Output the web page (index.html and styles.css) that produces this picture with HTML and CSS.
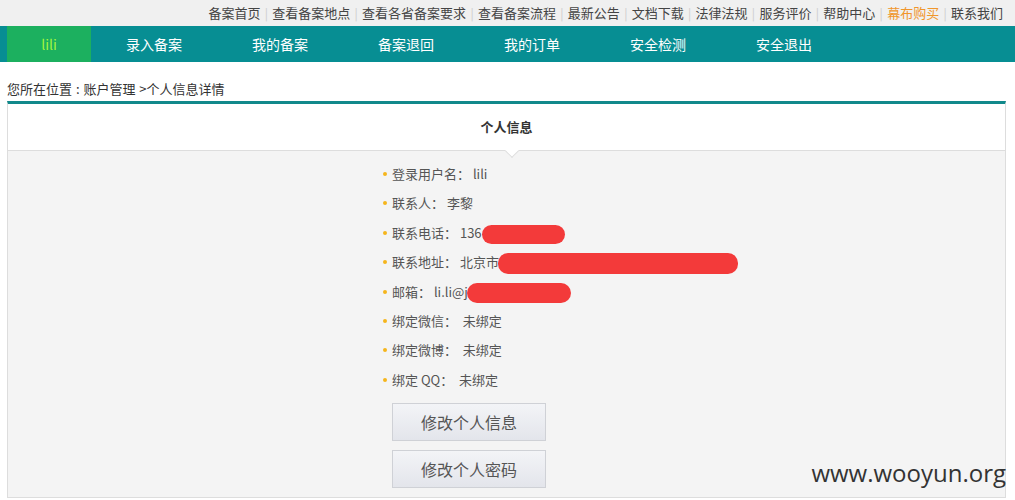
FILE: index.html
```html
<!DOCTYPE html>
<html lang="zh-CN">
<head>
<meta charset="utf-8">
<title>个人信息详情</title>
<link rel="stylesheet" href="styles.css">
</head>
<body>
<div class="topbar">
  <a>备案首页</a><i>|</i><a>查看备案地点</a><i>|</i><a>查看各省备案要求</a><i>|</i><a>查看备案流程</a><i>|</i><a>最新公告</a><i>|</i><a>文档下载</a><i>|</i><a>法律法规</a><i>|</i><a>服务评价</a><i>|</i><a>帮助中心</a><i>|</i><a class="hot">幕布购买</a><i>|</i><a>联系我们</a>
</div>
<div class="nav">
  <div class="nav-inner">
    <a class="user">lili</a>
    <a>录入备案</a>
    <a>我的备案</a>
    <a>备案退回</a>
    <a>我的订单</a>
    <a>安全检测</a>
    <a>安全退出</a>
  </div>
</div>
<div class="page">
  <div class="crumb">您所在位置 : 账户管理 &gt;个人信息详情</div>
  <div class="box">
    <div class="box-head">个人信息<span class="notch"></span></div>
    <div class="box-body">
      <ul class="info">
        <li>登录用户名： lili</li>
        <li>联系人： 李黎</li>
        <li>联系电话： 136<span class="mask m1"></span></li>
        <li>联系地址： 北京市<span class="mask m2"></span></li>
        <li>邮箱： li.li@j<span class="mask m3"></span></li>
        <li>绑定微信：&nbsp; 未绑定</li>
        <li>绑定微博：&nbsp; 未绑定</li>
        <li>绑定 QQ：&nbsp; 未绑定</li>
      </ul>
      <div class="btns">
        <button class="btn">修改个人信息</button>
        <button class="btn">修改个人密码</button>
      </div>
    </div>
  </div>
</div>
<div class="wm">www.wooyun.org</div>
</body>
</html>
```

FILE: styles.css
```css
* { box-sizing: border-box; }
body {
  margin: 0;
  font-family: "Noto Sans CJK SC", "Noto Sans", sans-serif;
  color: #333;
  background: #fff;
  position: relative;
  height: 500px;
  overflow: hidden;
}
.topbar {
  height: 26px;
  background: #f0f0f0;
  display: flex;
  justify-content: flex-end;
  align-items: center;
  padding-right: 12px;
  font-size: 13px;
  color: #444;
  line-height: 26px;
}
.topbar i {
  font-style: normal;
  color: #ccc;
  margin: 0 4.3px;
  font-size: 12px;
}
.topbar .hot { color: #f0962b; }
.nav {
  height: 36px;
  background: #078e93;
}
.nav-inner {
  display: flex;
  height: 36px;
  padding-left: 7px;
  font-size: 14px;
  line-height: 36px;
  color: #fff;
}
.nav-inner a { padding: 0 35px; }
.nav-inner .user {
  width: 84px;
  padding: 0;
  text-align: center;
  background: #1cb05f;
  color: #a4f53e;
}
.page {
  padding: 0 9px 0 7px;
}
.crumb {
  font-size: 13px;
  line-height: 18px;
  padding-top: 18px;
  height: 39px;
  color: #333;
  word-spacing: 1px;
}
.box {
  border-top: 3px solid #11898b;
  border-left: 1px solid #ddd;
  border-right: 1px solid #ddd;
  border-bottom: 1px solid #ddd;
  height: 397px;
}
.box-head {
  position: relative;
  height: 47px;
  line-height: 46px;
  text-align: center;
  font-size: 13px;
  font-weight: bold;
  color: #333;
  background: #fff;
  border-bottom: 1px solid #ddd;
}
.notch {
  position: absolute;
  left: 50%;
  margin-left: 0px;
  bottom: -6px;
  width: 10px;
  height: 10px;
  background: #fff;
  border-right: 1px solid #ddd;
  border-bottom: 1px solid #ddd;
  transform: rotate(45deg);
}
.box-body {
  background: #f4f4f4;
  height: 346px;
  padding-top: 8px;
  padding-left: 384px;
}
.info {
  list-style: none;
  margin: 0;
  padding: 0;
  font-size: 13px;
  color: #555;
}
.info li {
  position: relative;
  line-height: 29.4px;
  height: 29.4px;
  white-space: nowrap;
}
.info li::before {
  content: "";
  position: absolute;
  left: -9px;
  top: 13px;
  width: 4px;
  height: 4px;
  border-radius: 50%;
  background: #f5b51c;
}
.mask {
  display: inline-block;
  vertical-align: middle;
  background: #f33a3a;
  border-radius: 10px;
}
.m1 { width: 83px; height: 19px; margin-left: 0; }
.m2 { width: 240px; height: 21px; margin-left: -1px; }
.m3 { width: 104px; height: 20px; margin-left: -1px; }
.btns {
  display: flex;
  flex-direction: column;
  gap: 9px;
  margin-top: 9px;
}
.btn {
  width: 154px;
  height: 38px;
  border: 1px solid #cfd1d6;
  background: linear-gradient(#f3f4f7, #e3e5eb);
  font-family: "Noto Sans CJK SC", sans-serif;
  font-size: 16px;
  color: #555;
  padding: 0;
}
.wm {
  position: absolute;
  right: 9px;
  bottom: 14px;
  font-family: "Open Sans", sans-serif;
  font-size: 24px;
  color: #333;
  line-height: 26px;
}
```
